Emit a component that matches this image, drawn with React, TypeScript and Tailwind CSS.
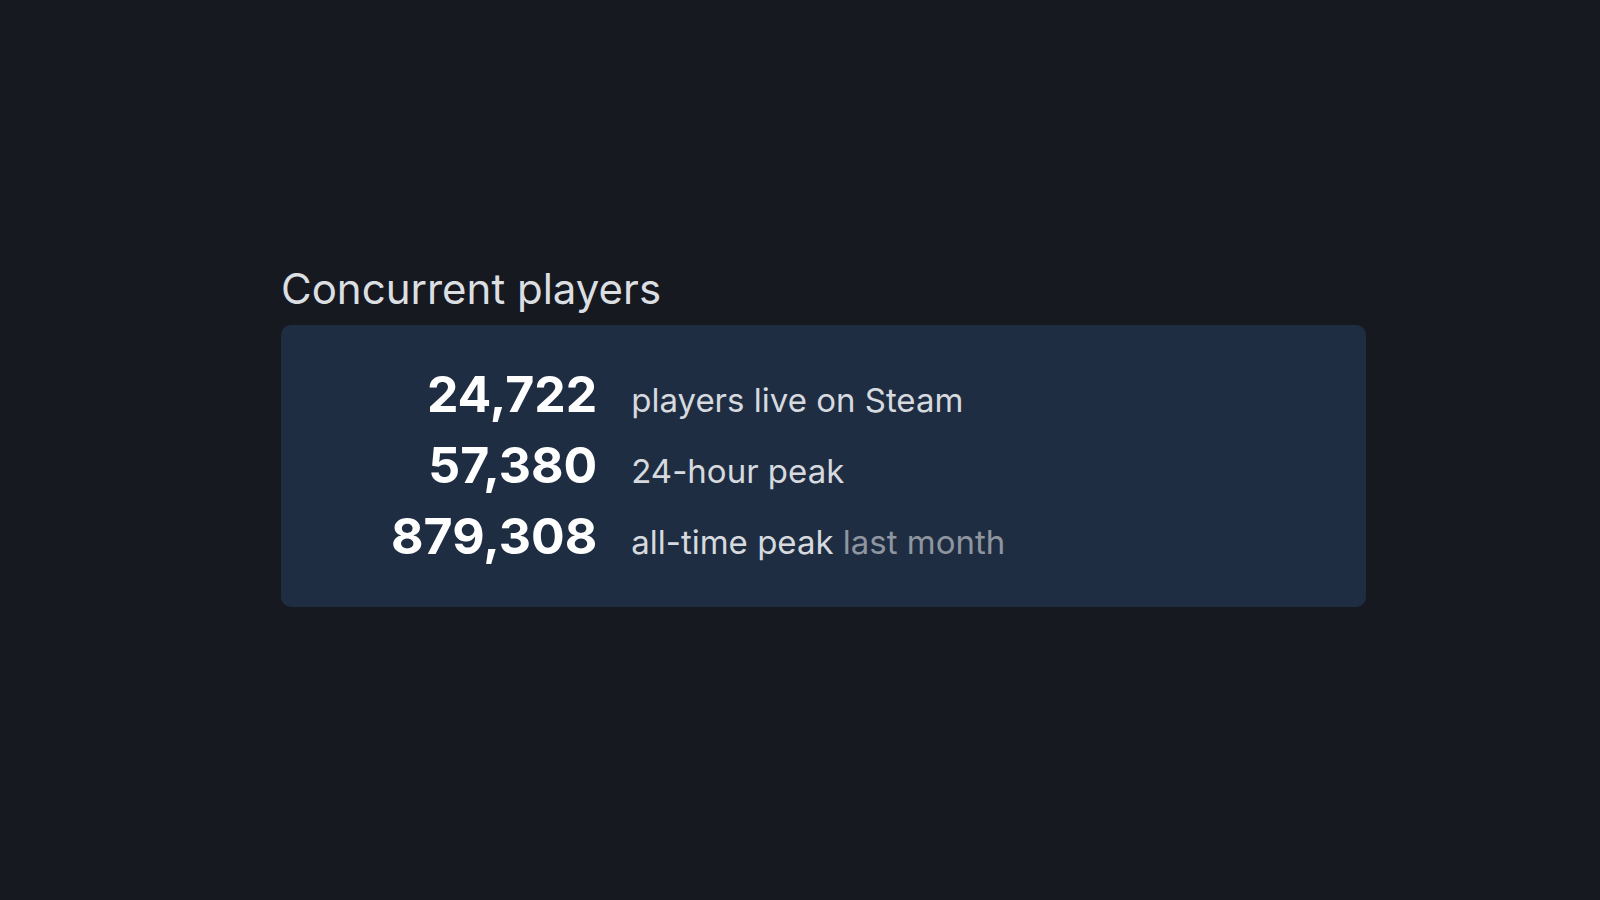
const stats = [
  { value: "24,722", label: "players live on Steam", note: "" },
  { value: "57,380", label: "24-hour peak", note: "" },
  { value: "879,308", label: "all-time peak", note: "last month" },
];

export default function App() {
  return (
    <div
      className="min-h-screen w-full bg-[#161920] pt-[264px] pl-[281px]"
      style={{ fontFamily: "Inter, 'Noto Sans', sans-serif" }}
    >
      <h2 className="text-[42px] leading-[50px] font-normal text-[#dcdfe2] mb-[11px]">
        Concurrent players
      </h2>

      <div className="w-[1085px] h-[282px] rounded-[10px] bg-[#1f2d43] py-[34px] pl-[110px]">
        <div className="grid grid-cols-[auto_1fr] items-baseline gap-x-[34px]">
          {stats.map((s) => (
            <div key={s.value} className="contents">
              <div className="text-right text-[50px] leading-[71px] font-bold text-white">
                {s.value}
              </div>
              <div className="text-[33px] leading-none text-[#d6dadf]">
                {s.label}
                {s.note && <span className="text-[#8e959f]"> {s.note}</span>}
              </div>
            </div>
          ))}
        </div>
      </div>
    </div>
  );
}
